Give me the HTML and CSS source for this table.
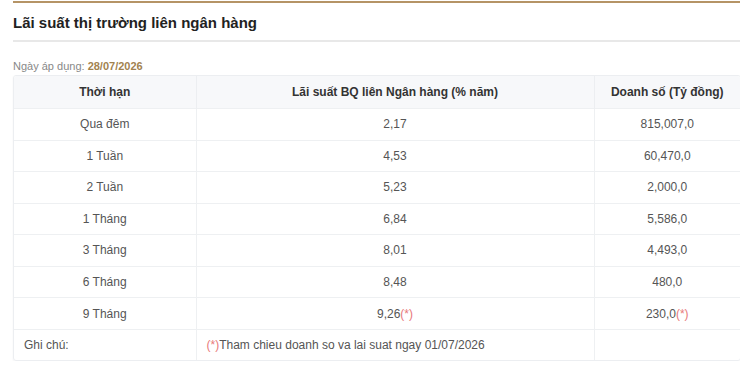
FILE: index.html
```html
<!DOCTYPE html>
<html lang="vi">
<head>
<meta charset="utf-8">
<link rel="stylesheet" href="styles.css">
</head>
<body>
<section class="box">
  <h2 class="title">Lãi suất thị trường liên ngân hàng</h2>
  <div class="date">Ngày áp dụng: <b>28/07/2026</b></div>
  <div class="table-wrap">
    <table class="rates">
      <colgroup>
        <col class="c1"><col class="c2"><col class="c3">
      </colgroup>
      <thead>
        <tr><th>Thời hạn</th><th>Lãi suất BQ liên Ngân hàng (% năm)</th><th>Doanh số (Tỷ đồng)</th></tr>
      </thead>
      <tbody>
        <tr><td>Qua đêm</td><td>2,17</td><td>815,007,0</td></tr>
        <tr><td>1 Tuần</td><td>4,53</td><td>60,470,0</td></tr>
        <tr><td>2 Tuần</td><td>5,23</td><td>2,000,0</td></tr>
        <tr><td>1 Tháng</td><td>6,84</td><td>5,586,0</td></tr>
        <tr><td>3 Tháng</td><td>8,01</td><td>4,493,0</td></tr>
        <tr><td>6 Tháng</td><td>8,48</td><td>480,0</td></tr>
        <tr><td>9 Tháng</td><td>9,26<span class="star">(*)</span></td><td>230,0<span class="star">(*)</span></td></tr>
        <tr class="note"><td>Ghi chú:</td><td><span class="star">(*)</span>Tham chieu doanh so va lai suat ngay 01/07/2026</td><td></td></tr>
      </tbody>
    </table>
  </div>
</section>
</body>
</html>
```

FILE: styles.css
```css
html, body {
  margin: 0;
  padding: 0;
  background: #fff;
}
body {
  font-family: "Liberation Sans", Arial, sans-serif;
  color: #555;
}
.box {
  margin-left: 13px;
  border-top: 2px solid #b59466;
  margin-top: 1px;
}
.title {
  margin: 0;
  font-size: 15px;
  font-weight: 600;
  color: #222;
  line-height: 18px;
  padding: 11px 0 8px;
  border-bottom: 2px solid #e8e8e8;
}
.date {
  font-size: 11px;
  color: #888;
  margin-top: 18px;
  line-height: 13px;
}
.date b {
  color: #a2824f;
  font-weight: 700;
}
.table-wrap {
  margin-top: 2px;
  width: 726px;
  border: 1px solid #eceef1;
  border-radius: 3px;
  box-shadow: 0 1px 2px rgba(0,0,0,0.06);
  overflow: hidden;
}
.rates {
  width: 100%;
  border-collapse: collapse;
  table-layout: fixed;
  font-size: 12px;
  line-height: 14px;
}
.c1 { width: 182px; }
.c2 { width: 398px; }
.c3 { width: 146px; }
.rates th {
  background: #f7f8fa;
  color: #333;
  font-weight: 700;
  height: 32px;
  padding: 0 8px;
  text-align: center;
  border-left: 1px solid #eceef1;
}
.rates td {
  height: 30.55px;
  padding: 0 8px;
  text-align: center;
  border-top: 1px solid #eef0f2;
  border-left: 1px solid #eef0f2;
  color: #555;
}
.rates th:first-child, .rates td:first-child {
  border-left: none;
}
.rates tr.note td {
  text-align: left;
  padding-left: 10px;
}
.star {
  color: #e8797a;
}
```
